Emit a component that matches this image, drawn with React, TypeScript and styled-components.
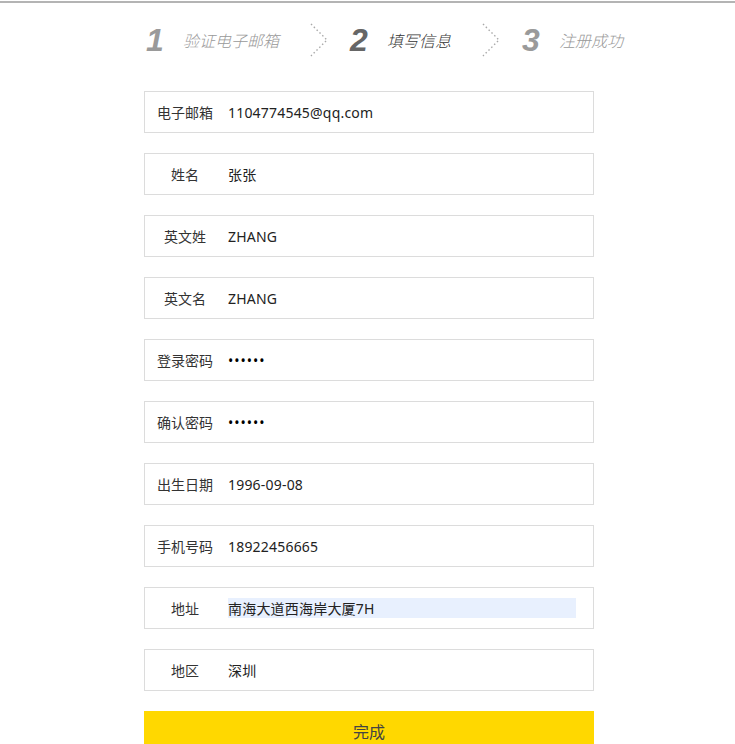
import React from "react";
import styled, { createGlobalStyle } from "styled-components";

const Global = createGlobalStyle`
  html, body { margin: 0; padding: 0; background: #fff; }
  body { font-family: "Noto Sans", "Noto Sans CJK SC", sans-serif; color: #333; }
  * { box-sizing: border-box; }
`;

const TopLine = styled.div`
  height: 2px;
  margin-top: 1px;
  background: #b4b4b4;
`;

const Page = styled.div`
  padding-left: 144px;
`;

const Steps = styled.div`
  display: flex;
  align-items: center;
  height: 80px;
  padding-left: 2px;
  margin-top: -3px;
  white-space: nowrap;
`;

const Step = styled.div`
  display: flex;
  align-items: center;
  gap: 15px;
`;

const StepNum = styled.span<{ $active?: boolean }>`
  font-family: "Liberation Sans", Arial, sans-serif;
  font-style: italic;
  font-weight: bold;
  font-size: 32px;
  line-height: 1;
  width: 22px;
  color: ${(p) => (p.$active ? "#666" : "#9a9a9a")};
`;

const StepLabel = styled.span<{ $active?: boolean }>`
  font-style: italic;
  font-weight: 300;
  font-size: 16px;
  color: ${(p) => (p.$active ? "#333" : "#999")};
`;

const Chevron = styled.svg`
  display: block;
  margin: 0 22px 0 31px;
`;

const Form = styled.div`
  width: 450px;
  display: flex;
  flex-direction: column;
  gap: 20px;
  margin-top: 11px;
`;

const Row = styled.div`
  height: 42px;
  border: 1px solid #dcdcdc;
  display: flex;
  align-items: center;
  background: #fff;
`;

const Label = styled.label`
  width: 80px;
  text-align: center;
  font-size: 14px;
  color: #333;
  flex: none;
`;

const Input = styled.input<{ $filled?: boolean }>`
  margin-left: 3px;
  width: 348px;
  height: 20px;
  border: none;
  outline: none;
  padding: 0;
  font-family: "Noto Sans", "Noto Sans CJK SC", sans-serif;
  font-size: 14px;
  letter-spacing: 0.2px;
  color: #222;
  background: ${(p) => (p.$filled ? "#e8f0fe" : "transparent")};
  &[type="password"] { letter-spacing: 1px; color: #000; }
`;

const Submit = styled.button`
  margin-top: 20px;
  width: 450px;
  height: 40px;
  border: none;
  background: #ffd800;
  font-family: "Noto Sans", "Noto Sans CJK SC", sans-serif;
  font-size: 16px;
  color: #444;
  padding: 0;
`;

const ChevronIcon = () => (
  <Chevron width="18" height="34" viewBox="0 0 18 34">
    <polyline
      points="1,1 17,17 1,33"
      fill="none"
      stroke="#a8a8a8"
      strokeWidth="1.4"
      strokeDasharray="1.5 2.5"
    />
  </Chevron>
);

const fields: { label: string; value: string; type?: string; filled?: boolean }[] = [
  { label: "电子邮箱", value: "1104774545@qq.com" },
  { label: "姓名", value: "张张" },
  { label: "英文姓", value: "ZHANG" },
  { label: "英文名", value: "ZHANG" },
  { label: "登录密码", value: "123456", type: "password" },
  { label: "确认密码", value: "123456", type: "password" },
  { label: "出生日期", value: "1996-09-08" },
  { label: "手机号码", value: "18922456665" },
  { label: "地址", value: "南海大道西海岸大厦7H", filled: true },
  { label: "地区", value: "深圳" },
];

export default function App() {
  return (
    <>
      <Global />
      <TopLine />
      <Page>
        <Steps>
          <Step>
            <StepNum>1</StepNum>
            <StepLabel>验证电子邮箱</StepLabel>
          </Step>
          <ChevronIcon />
          <Step>
            <StepNum $active>2</StepNum>
            <StepLabel $active>填写信息</StepLabel>
          </Step>
          <ChevronIcon />
          <Step>
            <StepNum>3</StepNum>
            <StepLabel>注册成功</StepLabel>
          </Step>
        </Steps>
        <Form>
          {fields.map((f) => (
            <Row key={f.label}>
              <Label>{f.label}</Label>
              <Input
                type={f.type ?? "text"}
                defaultValue={f.value}
                readOnly
                $filled={f.filled}
              />
            </Row>
          ))}
        </Form>
        <Submit>完成</Submit>
      </Page>
    </>
  );
}
